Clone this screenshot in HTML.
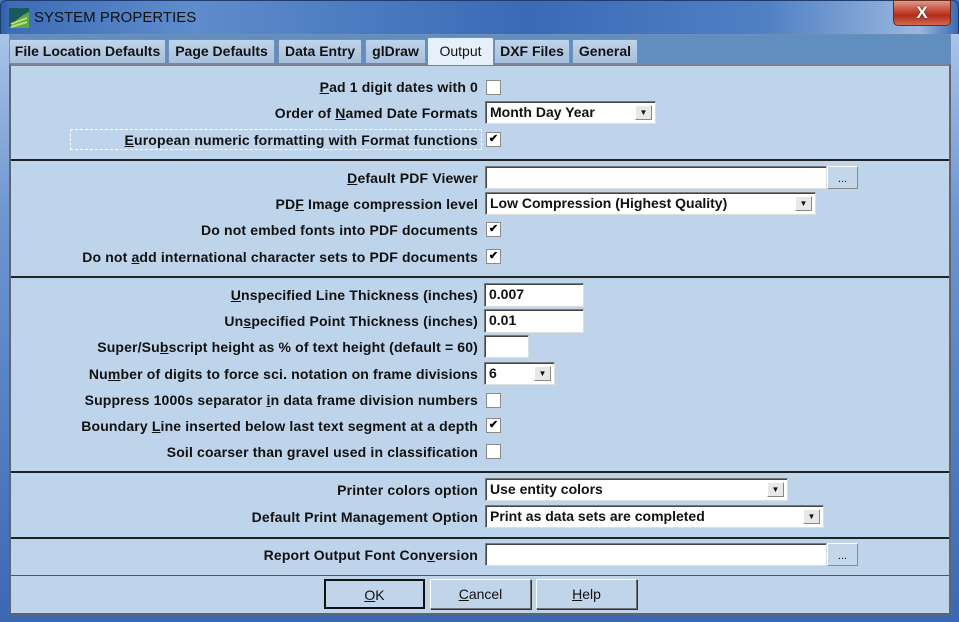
<!DOCTYPE html>
<html><head><style>
*{margin:0;padding:0;box-sizing:border-box}
body{width:959px;height:622px;overflow:hidden;background:#4a78c0;font-family:"Liberation Sans",sans-serif;position:relative}
.frame{position:absolute;left:0;top:0;width:959px;height:622px;border-radius:6px 6px 0 0;
background:linear-gradient(90deg,#2f5fa8 0px,#3c6cb8 8px,#5f8ccc 20%,#3a6ab6 55%,#5080c4 80%,#9ab7de 96%,#3a6ab6 100%);border:1px solid #1f3d6e}
.side{position:absolute;top:34px;width:9px;height:588px;background:linear-gradient(180deg,#a8c4e8,#6f97d0 30%,#3a68b4)}
.strip{position:absolute;left:9px;top:34px;width:942px;height:31px;background:#5f8ebf;border:1px solid #6e8fb8;border-bottom:none}
.panel{position:absolute;left:9px;top:64px;width:942px;height:551px;background:#bed4ea;border:2px solid #5f6470;border-top:2px solid #7a8290}
.title{position:absolute;left:34px;top:9px;font-size:15px;color:#111}
.close{position:absolute;left:893px;top:0;width:58px;height:26px;border-radius:0 0 5px 5px;background:linear-gradient(180deg,#e09a8a,#c4432f 45%,#b22d1a 60%,#d06a50);border:1px solid #6b2a20;color:#fff;font-weight:bold;font-size:17px;text-align:center;line-height:24px;text-shadow:0 0 2px #333}
.tab{position:absolute;top:39px;height:24px;background:linear-gradient(#c0d4ea,#a8c0dc);border:1px solid #7090b8;border-bottom:none;border-radius:2px 2px 0 0;font-weight:bold;font-size:14px;line-height:22px;text-align:center;color:#111;white-space:nowrap}
.tab.act{top:37px;height:28px;background:#e6f0fa;font-weight:normal;z-index:2;line-height:26px}
.lbl{position:absolute;right:481px;font-weight:bold;font-size:14px;letter-spacing:0.15px;color:#111;white-space:nowrap}
.cb{position:absolute;left:486px;width:15px;height:15px;background:#fff;border:1px solid #8a8a8a;font-size:11px;line-height:12px;text-align:center;font-weight:bold}
.in{position:absolute;background:#fff;border:1px solid #7a7a7a;border-right-color:#ddd;border-bottom-color:#ddd;box-shadow:inset 1px 1px 0 #444;font-weight:bold;font-size:14px;padding:3px 4px;line-height:15px;color:#111;white-space:nowrap}
.dd{position:absolute;right:3px;top:3px;width:17px;height:15px;background:#e8e8e8;border:1px solid #888;border-top-color:#fff;border-left-color:#fff;font-size:8px;text-align:center;line-height:14px}
.hr{position:absolute;left:11px;width:938px;height:2px;background:#222}
.btn{position:absolute;top:579px;width:101px;height:30px;background:#c0d4ea;border:1px solid #707070;border-top-color:#fff;border-left-color:#fff;box-shadow:1px 1px 0 #333;font-size:14px;text-align:center;line-height:28px;color:#111}
.dots{position:absolute;width:31px;height:23px;background:#c4d6ea;border:1px solid #888;border-top-color:#fff;border-left-color:#fff;font-size:11px;text-align:center;line-height:24px}
u{text-decoration:underline}
</style></head><body>
<div class="frame"></div>
<div class="side" style="left:0"></div><div class="side" style="left:951px;width:8px"></div>
<div style="position:absolute;left:0;top:615px;width:959px;height:7px;background:#3a68b4"></div>
<svg style="position:absolute;left:9px;top:8px" width="20" height="20"><rect width="20" height="20" fill="#1a5a5a"/><path d="M0 20 Q10 8 20 4 L20 20Z" fill="#5aa84a"/><path d="M2 16 L18 10 M2 19 L18 14" stroke="#b8e070" stroke-width="2"/></svg>
<div class="title">SYSTEM PROPERTIES</div>
<div class="close">X</div>
<div class="strip"></div>
<div class="tab" style="left:9px;width:157px">File Location Defaults</div>
<div class="tab" style="left:168px;width:107px">Page Defaults</div>
<div class="tab" style="left:278px;width:84px">Data Entry</div>
<div class="tab" style="left:365px;width:61px">glDraw</div>
<div class="tab act" style="left:427px;width:67px">Output</div>
<div class="tab" style="left:494px;width:76px">DXF Files</div>
<div class="tab" style="left:572px;width:66px">General</div>
<div class="panel"></div>

<div style="position:absolute;left:70px;top:129px;width:412px;height:21px;border:1px dashed #fff"></div>
<div class="lbl" style="top:79px"><u>P</u>ad 1 digit dates with 0</div>
<div class="cb" style="top:80px"></div>
<div class="lbl" style="top:105px">Order of <u>N</u>amed Date Formats</div>
<div class="in" style="left:485px;top:101px;width:171px;height:23px">Month Day Year<div class="dd">▼</div></div>
<div class="lbl" style="top:132px"><u>E</u>uropean numeric formatting with Format functions</div>
<div class="cb" style="top:132px">✔</div>
<div class="hr" style="top:159px"></div>

<div class="lbl" style="top:170px"><u>D</u>efault PDF Viewer</div>
<div class="in" style="left:485px;top:166px;width:342px;height:23px"></div>
<div class="dots" style="left:827px;top:166px">...</div>
<div class="lbl" style="top:196px">PD<u>F</u> Image compression level</div>
<div class="in" style="left:485px;top:192px;width:331px;height:23px">Low Compression (Highest Quality)<div class="dd">▼</div></div>
<div class="lbl" style="top:222px">Do not embed fonts into PDF documents</div>
<div class="cb" style="top:222px">✔</div>
<div class="lbl" style="top:249px">Do not <u>a</u>dd international character sets to PDF documents</div>
<div class="cb" style="top:249px">✔</div>
<div class="hr" style="top:276px"></div>

<div class="lbl" style="top:287px"><u>U</u>nspecified Line Thickness (inches)</div>
<div class="in" style="left:484px;top:283px;width:100px;height:24px">0.007</div>
<div class="lbl" style="top:313px">Un<u>s</u>pecified Point Thickness (inches)</div>
<div class="in" style="left:484px;top:309px;width:100px;height:24px">0.01</div>
<div class="lbl" style="top:339px">Super/Su<u>b</u>script height as % of text height (default = 60)</div>
<div class="in" style="left:484px;top:335px;width:45px;height:23px"></div>
<div class="lbl" style="top:366px">Nu<u>m</u>ber of digits to force sci. notation on frame divisions</div>
<div class="in" style="left:484px;top:362px;width:71px;height:23px">6<div class="dd">▼</div></div>
<div class="lbl" style="top:392px">Suppress 1000s separator <u>i</u>n data frame division numbers</div>
<div class="cb" style="top:393px"></div>
<div class="lbl" style="top:418px">Boundary <u>L</u>ine inserted below last text segment at a depth</div>
<div class="cb" style="top:418px">✔</div>
<div class="lbl" style="top:444px">Soil coarser than <u>g</u>ravel used in classification</div>
<div class="cb" style="top:444px"></div>
<div class="hr" style="top:471px"></div>

<div class="lbl" style="top:482px">Printer colors option</div>
<div class="in" style="left:485px;top:478px;width:303px;height:23px">Use entity colors<div class="dd">▼</div></div>
<div class="lbl" style="top:509px">Default Print Management Option</div>
<div class="in" style="left:485px;top:505px;width:339px;height:23px">Print as data sets are completed<div class="dd">▼</div></div>
<div class="hr" style="top:537px"></div>

<div class="lbl" style="top:547px">Report Output Font Con<u>v</u>ersion</div>
<div class="in" style="left:485px;top:543px;width:342px;height:23px"></div>
<div class="dots" style="left:827px;top:543px">...</div>
<div class="hr" style="top:575px;height:1px;background:#555"></div>

<div class="btn" style="left:324px;border:2px solid #111;box-shadow:none"><u>O</u>K</div>
<div class="btn" style="left:430px"><u>C</u>ancel</div>
<div class="btn" style="left:536px"><u>H</u>elp</div>
</body></html>
